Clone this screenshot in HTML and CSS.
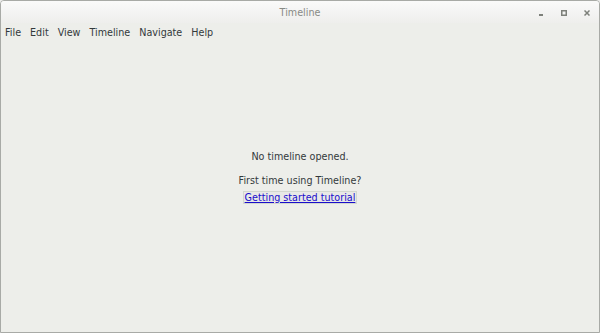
FILE: index.html
```html
<!DOCTYPE html>
<html lang="en">
<head>
    <meta charset="UTF-8">
    <title>Timeline</title>
    <link rel="stylesheet" href="styles.css">
</head>
<body>
    <div class="window">
        <div class="titlebar">
            <span class="title">Timeline</span>
            <div class="buttons">
                <span class="btn">
                    <svg width="6" height="6" viewBox="0 0 6 6"><rect x="1" y="4" width="4" height="2" fill="#7d807a"/></svg>
                </span>
                <span class="btn">
                    <svg width="6" height="6" viewBox="0 0 6 6"><rect x="0.75" y="0.75" width="4.5" height="4.5" fill="none" stroke="#7d807a" stroke-width="1.5"/></svg>
                </span>
                <span class="btn">
                    <svg width="6" height="6" viewBox="0 0 6 6"><path d="M0.5 0.5L5.5 5.5M5.5 0.5L0.5 5.5" stroke="#7d807a" stroke-width="1.5"/></svg>
                </span>
            </div>
        </div>
        <nav class="menubar">
            <a href="#">File</a>
            <a href="#">Edit</a>
            <a href="#">View</a>
            <a href="#">Timeline</a>
            <a href="#">Navigate</a>
            <a href="#">Help</a>
        </nav>
        <div class="content">
            <p class="msg">No timeline opened.</p>
            <p class="first">First time using Timeline?</p>
            <a class="tutorial" href="#">Getting started tutorial</a>
        </div>
    </div>
</body>
</html>
```

FILE: styles.css
```css
* {
    margin: 0;
    padding: 0;
    box-sizing: border-box;
}

body, html {
    width: 600px;
    height: 333px;
    background-color: #ededeb;
    font-family: "DejaVu Sans", sans-serif;
    font-size: 9.6px;
    color: #33393b;
}

.window {
    width: 600px;
    height: 333px;
    border: 1px solid #a8aaa6;
    border-radius: 4px 4px 0 0;
    background-color: #edeeea;
    display: flex;
    flex-direction: column;
}

.titlebar {
    height: 22px;
    position: relative;
    background: linear-gradient(#fafafa, #eeeeec);
    border-radius: 3px 3px 0 0;
    display: flex;
    align-items: center;
    justify-content: center;
}

.title {
    color: #888a85;
}

.buttons {
    position: absolute;
    right: 1px;
    top: 0;
    height: 22px;
    display: flex;
    align-items: center;
    padding-top: 1px;
}

.btn {
    width: 23px;
    height: 6px;
    display: flex;
    justify-content: center;
}

.btn svg {
    display: block;
}

.menubar {
    height: 19px;
    display: flex;
    align-items: center;
    padding-left: 4px;
    gap: 9px;
}

.menubar a {
    color: #33393b;
    text-decoration: none;
}

.content {
    flex: 1;
    display: flex;
    flex-direction: column;
    align-items: center;
    justify-content: center;
    padding-bottom: 21px;
}

.msg, .first {
    line-height: 14px;
}

.msg {
    margin-bottom: 10px;
}

.first {
    margin-bottom: 3px;
}

.tutorial {
    color: #1a0dcc;
    text-decoration: underline;
    border: 1px solid #d3d7cf;
    background-color: #e8e9e6;
    padding: 0 1px;
    line-height: 11px;
}
```
